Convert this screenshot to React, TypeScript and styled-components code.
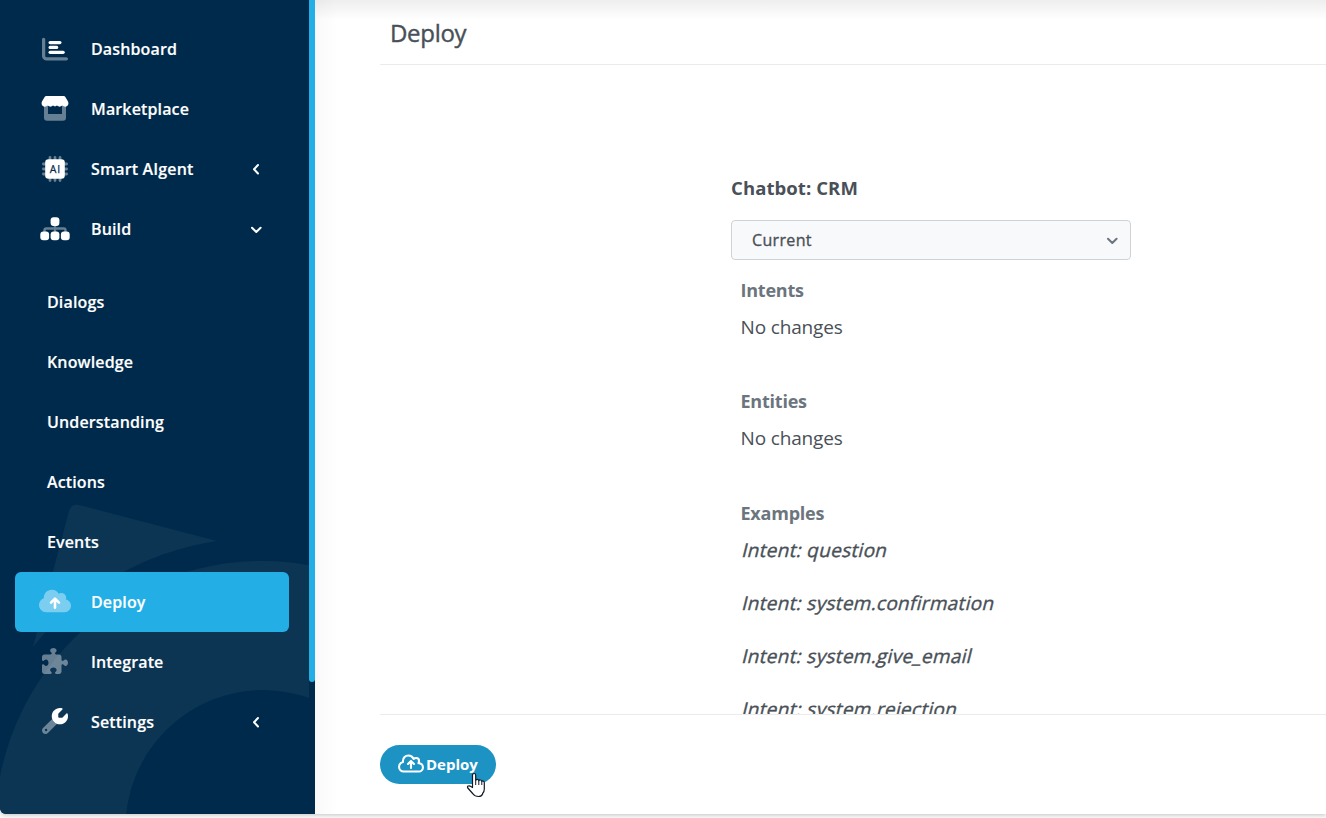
import React from 'react';
import styled, { createGlobalStyle } from 'styled-components';
import { FaPuzzlePiece } from 'react-icons/fa6';

const GlobalStyle = createGlobalStyle`
  * { box-sizing: border-box; }
  body {
    margin: 0;
    background: #fafafa;
    font-family: 'Open Sans', 'Noto Sans', sans-serif;
    color: #495057;
    overflow: hidden;
  }
`;

const Shell = styled.div`
  display: flex;
  height: 814px;
  margin-bottom: 4px;
  background: #fff;
  border-bottom-left-radius: 6px;
  box-shadow: 0 1px 4px rgba(0, 0, 0, 0.22);
`;

const Sidebar = styled.aside`
  position: relative;
  display: flex;
  flex: none;
  width: 315px;
  background: #002a4b;
  border-bottom-left-radius: 6px;
  overflow: hidden;
`;

const Watermark = styled.svg`
  position: absolute;
  left: 0;
  bottom: 0;
`;

const Nav = styled.nav`
  position: relative;
  flex: 1;
  padding: 19px 20px 0 15px;
`;

const SubNav = styled.div`
  padding-top: 13px;
`;

const NavItem = styled.div<{ $active?: boolean; $sub?: boolean }>`
  display: flex;
  align-items: center;
  height: 60px;
  padding: 0 26px 0 ${(p) => (p.$sub ? '32px' : '24px')};
  border-radius: 6px;
  background: ${(p) => (p.$active ? '#24aee6' : 'transparent')};
  color: #fff;
  font-size: 16px;
  font-weight: 600;
  letter-spacing: 0.14px;
  -webkit-text-stroke: 0.15px #fff;
`;

const IconSlot = styled.span<{ $raised?: boolean }>`
  display: flex;
  justify-content: center;
  width: 32px;
  margin-right: 20px;
  padding-bottom: ${(p) => (p.$raised ? '2px' : '0')};
`;

const Label = styled.span`
  flex: 1;
`;

const Puzzle = styled(FaPuzzlePiece)`
  width: 26px;
  height: 26px;
  opacity: 0.4;
`;

const ScrollTrack = styled.div`
  position: relative;
  width: 6px;
  background: #002a4b;
`;

const ScrollThumb = styled.div`
  height: 682px;
  background: #24aee6;
  border-radius: 0 0 3px 3px;
`;

const Main = styled.main`
  flex: 1;
  min-width: 0;
  display: flex;
  flex-direction: column;
  padding-left: 65px;
  background: linear-gradient(to right, rgba(0, 0, 0, 0.025), transparent 22px),
    linear-gradient(to bottom, rgba(0, 0, 0, 0.065), transparent 20px), #fff;
`;

const Header = styled.header`
  height: 65px;
  padding: 16px 0 0 10px;
  border-bottom: 1px solid #ebebeb;
`;

const Title = styled.h1`
  margin: 0;
  font-size: 24px;
  line-height: 33px;
  font-weight: 400;
  letter-spacing: -0.3px;
  -webkit-text-stroke: 0.4px #495057;
`;

const Content = styled.section`
  height: 650px;
  padding: 110px 0 0 351px;
  border-bottom: 1px solid #ebebeb;
  overflow: hidden;
`;

const BotName = styled.h2`
  margin: 0 0 19px;
  font-size: 18.5px;
  line-height: 26px;
  font-weight: 700;
  letter-spacing: 0.09px;
`;

const Select = styled.div`
  display: flex;
  align-items: center;
  justify-content: space-between;
  width: 400px;
  height: 40px;
  padding: 0 11px 0 20px;
  border: 1px solid #d0d3d6;
  border-radius: 4px;
  background: #f8f9fb;
  font-size: 16px;
  font-weight: 400;
  letter-spacing: 0.35px;
  -webkit-text-stroke: 0.35px #495057;
`;

const Group = styled.div<{ $height: number }>`
  height: ${(p) => p.$height}px;
  padding-left: 9.5px;
`;

const GroupTitle = styled.h3`
  margin: 0;
  color: #6c757d;
  font-size: 18px;
  line-height: 24px;
  font-weight: 700;
  letter-spacing: -0.22px;
`;

const Value = styled.p`
  margin: 12px 0 0;
  font-size: 19px;
  line-height: 26px;
  letter-spacing: -0.15px;
`;

const Example = styled.p`
  width: max-content;
  margin: 12px 0 27px;
  font-size: 19px;
  line-height: 26px;
  font-weight: 400;
  letter-spacing: 0.29px;
  -webkit-text-stroke: 0.4px #495057;
  transform: skewX(-14deg);
  transform-origin: 0 20px;
`;

const Groups = styled.div`
  padding-top: 18px;
`;

const Footer = styled.footer`
  padding-top: 30px;
`;

const DeployButton = styled.button`
  position: relative;
  display: flex;
  align-items: center;
  gap: 2px;
  width: 116px;
  height: 39px;
  padding: 0 0 2px 18px;
  border: 0;
  border-radius: 20px;
  background: #1d93c3;
  color: #fff;
  font: 700 15px 'Open Sans', sans-serif;
`;

const Pointer = styled.svg`
  position: absolute;
  left: 85.5px;
  top: 27px;
`;

const CLOUD =
  'M144 480C64.5 480 0 415.5 0 336c0-62.8 40.2-116.2 96.2-135.9c-.1-2.7-.2-5.4-.2-8.1c0-88.4 71.6-160 160-160c59.3 0 111 32.2 138.7 80.2C409.9 102 428.3 96 448 96c53 0 96 43 96 96c0 12.2-2.3 23.8-6.4 34.6C596 238.4 640 290.1 640 352c0 70.7-57.3 128-128 128H144z';

const DashboardIcon = () => (
  <svg width="26" height="26" viewBox="0 0 512 512" fill="#fff">
    <path opacity=".4" d="M32 32c17.7 0 32 14.3 32 32v336c0 8.8 7.2 16 16 16h400c17.7 0 32 14.3 32 32s-14.3 32-32 32H80c-44.2 0-80-35.8-80-80V64C0 46.3 14.3 32 32 32z" />
    <rect x="128" y="96" width="256" height="64" rx="32" />
    <rect x="128" y="192" width="192" height="64" rx="32" />
    <rect x="128" y="288" width="320" height="64" rx="32" />
  </svg>
);

const StoreIcon = () => (
  <svg width="28" height="26" viewBox="0 0 28 26" fill="#fff">
    <path opacity=".4" d="M3 9h4v9h14V9h4v12.700a3 3 0 0 1-3 3H6a3 3 0 0 1-3-3z" />
    <path d="M5.200 0h17.600q.9 0 1.400.8l2.700 4.400c1.200 2.100.3 5.100-2.400 5.500-1.300.1-2.400-.3-3.200-1.100-1.700 1.500-3.800 1.500-5.300 0-1.200 1.100-2.800 1.100-4 0-1.500 1.500-3.600 1.500-5.300 0-.8.8-1.900 1.200-3.200 1.100C.8 10.300-.1 7.300 1.100 5.200L3.800.8Q4.300 0 5.200 0z" />
  </svg>
);

const ChipIcon = () => (
  <svg width="26" height="26" viewBox="0 0 26 26">
    <g stroke="#fff" strokeOpacity=".4" strokeWidth="2.800" strokeLinecap="round">
      <path d="M8 1.400v3M13 1.400v3M18 1.400v3M8 22v2.600M13 22v2.600M18 22v2.600M1.400 8h3M1.400 13h3M1.400 18h3M22 8h2.600M22 13h2.600M22 18h2.600" />
    </g>
    <rect x="3.200" y="3.200" width="19.600" height="19.600" rx="3.300" fill="#fff" />
    <text x="13.500" y="16.500" textAnchor="middle" fontFamily="Open Sans, sans-serif" fontSize="10.500" fontWeight="400" letterSpacing="1" fill="#002a4b" stroke="#002a4b" strokeWidth=".25">AI</text>
  </svg>
);

const SitemapIcon = () => (
  <svg width="30" height="26" viewBox="0 0 30 26" fill="#fff">
    <path opacity=".4" fill="none" stroke="#fff" strokeWidth="2.400" d="M4.500 17v-2.800q0-1.700 1.700-1.700h17.600q1.700 0 1.700 1.700V17M15 9v8" />
    <rect x="10.600" y="1.200" width="8.800" height="8.800" rx="3" />
    <rect x=".3" y="15.600" width="8.800" height="8.600" rx="3" />
    <rect x="10.600" y="15.600" width="8.800" height="8.600" rx="3" />
    <rect x="20.900" y="15.600" width="8.800" height="8.600" rx="3" />
  </svg>
);

const CloudIcon = () => (
  <svg width="32" height="26" viewBox="0 0 640 512" fill="none">
    <path opacity=".4" fill="#fff" d={CLOUD} />
    <path stroke="#fff" strokeWidth="52" strokeLinecap="round" strokeLinejoin="round" d="M320 392V214M240 287l80-80 80 80" />
  </svg>
);

const CloudOutlineIcon = () => (
  <svg width="26" height="21" viewBox="0 0 640 512" fill="none" stroke="#fff" strokeWidth="52" strokeLinejoin="round" strokeLinecap="round">
    <path d="M144 454C79 454 26 401 26 336c0-53 34-97 96-117V192c0-74 60-134 134-134c55 0 105 33 128 86c20-15 40-22 64-22c39 0 70 31 70 70c0 18-4 32-14 54c62 0 110 46 110 106c0 56-46 102-102 102H144z" />
    <path d="M320 366V200M246 266l74-74 74 74" />
  </svg>
);

const WrenchIcon = () => (
  <svg width="26" height="26" viewBox="0 0 512 512" fill="#fff">
    <path d="M352 320c88.400 0 160-71.600 160-160c0-15.300-2.200-30.100-6.200-44.200c-3.100-10.800-16.400-13.200-24.300-5.300l-76.800 76.800c-3 3-7.100 4.700-11.300 4.700H336c-8.800 0-16-7.200-16-16v-57.400c0-4.200 1.700-8.300 4.700-11.300l76.800-76.800c7.900-7.900 5.400-21.200-5.300-24.300C382.100 2.200 367.300 0 352 0c-88.400 0-160 71.600-160 160s71.600 160 160 160z" />
    <path opacity=".4" fillRule="evenodd" d="M201.500 214.500L19.900 396.100C7.200 408.800 0 426.100 0 444.100C0 481.600 30.400 512 67.900 512c18 0 35.300-7.200 48-19.900L297.500 310.500c-45-17-79-51-96-96zM80 408a24 24 0 1 1 0 48a24 24 0 1 1 0-48z" />
  </svg>
);

const Chevron = ({ left, color = '#fff' }: { left?: boolean; color?: string }) => (
  <svg width="14" height="14" viewBox="0 0 14 14" fill="none" stroke={color} strokeWidth="2" strokeLinecap="round" strokeLinejoin="round">
    <path d={left ? 'M9 3L5 7.200l4 4.300' : 'M3 5.700L7.300 10l4.300-4.300'} />
  </svg>
);

const topItems = [
  { label: 'Dashboard', icon: <DashboardIcon /> },
  { label: 'Marketplace', icon: <StoreIcon /> },
  { label: 'Smart AIgent', icon: <ChipIcon />, arrow: <Chevron left /> },
  { label: 'Build', icon: <SitemapIcon />, arrow: <Chevron /> },
];
const subItems = ['Dialogs', 'Knowledge', 'Understanding', 'Actions', 'Events'];
const bottomItems = [
  { label: 'Deploy', icon: <CloudIcon />, active: true },
  { label: 'Integrate', icon: <Puzzle /> },
  { label: 'Settings', icon: <WrenchIcon />, arrow: <Chevron left /> },
];
const examples = ['question', 'system.confirmation', 'system.give_email', 'system.rejection'];

type Item = {
  label: string;
  icon: React.ReactNode;
  arrow?: React.ReactNode;
  active?: boolean;
  raised?: boolean;
};

const MenuEntry = ({ label, icon, arrow, active, raised }: Item) => (
  <NavItem $active={active}>
    <IconSlot $raised={raised}>{icon}</IconSlot>
    <Label>{label}</Label>
    {arrow}
  </NavItem>
);

export default function App() {
  return (
    <>
      <GlobalStyle />
      <Shell>
        <Sidebar>
          <Watermark width="309" height="314" viewBox="0 500 309 314" fill="#0c3554">
            <path d="M69 511Q71.500 503 80 505.200L217 541A291 291 0 0 0 33 647z" />
            <path fillRule="evenodd" d="M-5 828a267 267 0 0 1 534 0zM125.500 828a137.500 138 0 0 1 275 0z" />
          </Watermark>
          <Nav>
            {topItems.map((i) => <MenuEntry key={i.label} {...i} />)}
            <SubNav>
              {subItems.map((s) => <NavItem key={s} $sub>{s}</NavItem>)}
            </SubNav>
            {bottomItems.map((i) => <MenuEntry key={i.label} raised {...i} />)}
          </Nav>
          <ScrollTrack><ScrollThumb /></ScrollTrack>
        </Sidebar>
        <Main>
          <Header><Title>Deploy</Title></Header>
          <Content>
            <BotName>Chatbot: CRM</BotName>
            <Select>Current<Chevron color="#6c757d" /></Select>
            <Groups>
              <Group $height={111}>
                <GroupTitle>Intents</GroupTitle>
                <Value>No changes</Value>
              </Group>
              <Group $height={112}>
                <GroupTitle>Entities</GroupTitle>
                <Value>No changes</Value>
              </Group>
              <Group $height={250}>
                <GroupTitle>Examples</GroupTitle>
                {examples.map((e) => <Example key={e}>Intent: {e}</Example>)}
              </Group>
            </Groups>
          </Content>
          <Footer>
            <DeployButton>
              <CloudOutlineIcon />
              Deploy
              <Pointer width="20" height="26" viewBox="0 0 20 26">
                <path fill="#fff" stroke="#111827" strokeWidth="1.200" strokeLinejoin="round" d="M6.500 15.500V3.200q0-1.700 1.600-1.700t1.600 1.700V8.500q.3-1.300 1.500-1.200 1.500.1 1.600 1.500.5-1 1.600-.8 1.300.2 1.400 1.500.4-.8 1.400-.5 1.100.4 1.100 1.700V17q0 3-1.700 4.500V22q-1 2.500-4 2.500-3.800 0-5.500-2.500L1.800 16q-.8-1.500.3-2 1.500-.6 2.800.5z" />
                <path fill="none" stroke="#111827" strokeWidth="1" d="M9.700 8.500v4.500M12.800 9v4M15.800 9.500V13" />
              </Pointer>
            </DeployButton>
          </Footer>
        </Main>
      </Shell>
    </>
  );
}
